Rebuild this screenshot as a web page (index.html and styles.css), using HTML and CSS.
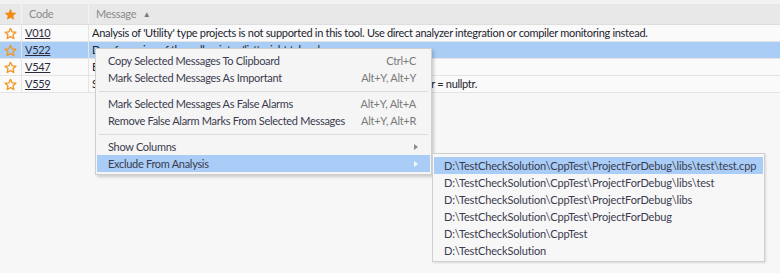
FILE: index.html
```html
<!DOCTYPE html>
<html>
<head>
<meta charset="utf-8">
<link rel="stylesheet" href="styles.css">
</head>
<body>
<div class="app">
  <div class="topstrip"></div>
  <div class="grid">
    <div class="row head">
      <div class="c-star"><svg width="13" height="13" viewBox="0 0 24 24"><path d="M12 1.5l3.2 7 7.6.8-5.7 5.1 1.6 7.5L12 18l-6.7 3.9 1.6-7.5L1.2 9.3l7.6-.8z" fill="#f08c14"/></svg></div>
      <div class="c-code">Code</div>
      <div class="c-msg">Message <span class="sort">&#9650;</span></div>
    </div>
    <div class="row">
      <div class="c-star"><svg width="13" height="13" viewBox="0 0 24 24"><path d="M12 2.5l2.9 6.4 7 .8-5.2 4.7 1.5 6.9L12 17.7l-6.2 3.6 1.5-6.9L2.1 9.7l7-.8z" fill="none" stroke="#f2951e" stroke-width="2.4" stroke-linejoin="round"/></svg></div>
      <div class="c-code"><a>V010</a></div>
      <div class="c-msg">Analysis of 'Utility' type projects is not supported in this tool. Use direct analyzer integration or compiler monitoring instead.</div>
    </div>
    <div class="row sel">
      <div class="c-star"><svg width="13" height="13" viewBox="0 0 24 24"><path d="M12 2.5l2.9 6.4 7 .8-5.2 4.7 1.5 6.9L12 17.7l-6.2 3.6 1.5-6.9L2.1 9.7l7-.8z" fill="none" stroke="#f2951e" stroke-width="2.4" stroke-linejoin="round"/></svg></div>
      <div class="c-code"><a>V522</a></div>
      <div class="c-msg">Dereferencing of the null pointer 'list' might take place.</div>
    </div>
    <div class="row">
      <div class="c-star"><svg width="13" height="13" viewBox="0 0 24 24"><path d="M12 2.5l2.9 6.4 7 .8-5.2 4.7 1.5 6.9L12 17.7l-6.2 3.6 1.5-6.9L2.1 9.7l7-.8z" fill="none" stroke="#f2951e" stroke-width="2.4" stroke-linejoin="round"/></svg></div>
      <div class="c-code"><a>V547</a></div>
      <div class="c-msg">Expression 'list != nullptr' is always true.</div>
    </div>
    <div class="row">
      <div class="c-star"><svg width="13" height="13" viewBox="0 0 24 24"><path d="M12 2.5l2.9 6.4 7 .8-5.2 4.7 1.5 6.9L12 17.7l-6.2 3.6 1.5-6.9L2.1 9.7l7-.8z" fill="none" stroke="#f2951e" stroke-width="2.4" stroke-linejoin="round"/></svg></div>
      <div class="c-code"><a>V559</a></div>
      <div class="c-msg">Suspicious assignment inside the condition expression of 'if' operator: &nbsp;&nbsp;&nbsp;&nbsp;&nbsp;&nbsp;ptr = nullptr.</div>
    </div>
  </div>

  <div class="menu">
    <div class="item"><span>Copy Selected Messages To Clipboard</span><span class="key">Ctrl+C</span></div>
    <div class="item"><span>Mark Selected Messages As Important</span><span class="key">Alt+Y, Alt+Y</span></div>
    <div class="sep"></div>
    <div class="item"><span>Mark Selected Messages As False Alarms</span><span class="key">Alt+Y, Alt+A</span></div>
    <div class="item"><span>Remove False Alarm Marks From Selected Messages</span><span class="key">Alt+Y, Alt+R</span></div>
    <div class="sep"></div>
    <div class="item"><span>Show Columns</span><span class="arrow"></span></div>
    <div class="item hl"><span>Exclude From Analysis</span><span class="arrow"></span></div>
  </div>

  <div class="submenu">
    <div class="sitem hl">D:\TestCheckSolution\CppTest\ProjectForDebug\libs\test\test.cpp</div>
    <div class="sitem">D:\TestCheckSolution\CppTest\ProjectForDebug\libs\test</div>
    <div class="sitem">D:\TestCheckSolution\CppTest\ProjectForDebug\libs</div>
    <div class="sitem">D:\TestCheckSolution\CppTest\ProjectForDebug</div>
    <div class="sitem">D:\TestCheckSolution\CppTest</div>
    <div class="sitem">D:\TestCheckSolution</div>
  </div>
</div>
</body>
</html>
```
FILE: styles.css
```css
html, body {
  margin: 0;
  padding: 0;
  background: #f7f7f7;
}
body {
  font-family: Lato, "Noto Sans", sans-serif;
  font-size: 11px;
  letter-spacing: -0.3px;
  color: #23232d;
  width: 780px;
  height: 273px;
  overflow: hidden;
}
.app {
  position: relative;
  width: 780px;
  height: 273px;
}
.topstrip {
  height: 4px;
  background: #f2f2f2;
}
.row {
  display: flex;
  height: 16px;
  border-bottom: 1px solid #e4e4e4;
  background: #fafafa;
  line-height: 16px;
  white-space: nowrap;
}
.row.head {
  height: 20px;
  line-height: 20px;
  background: #e8e8e8;
  border-bottom: 1px solid #dedede;
  color: #8a8a8a;
}
.row.sel {
  background: #a9cdf5;
}
.c-star {
  width: 21px;
  flex: none;
  display: flex;
  align-items: center;
  justify-content: center;
  border-right: 1px solid #e4e4e4;
}
.head .c-star { border-right-color: #f3f3f3; }
.c-code {
  width: 67px;
  flex: none;
  padding-left: 3px;
  box-sizing: border-box;
  border-right: 1px solid #e4e4e4;
}
.head .c-code { padding-left: 7px; border-right-color: #f3f3f3; }
.c-code a {
  color: #2a2a3a;
  text-decoration: underline;
}
.c-msg {
  flex: 1;
  padding-left: 3px;
  overflow: hidden;
}
.head .c-msg { padding-left: 7px; }
.sort {
  font-size: 8px;
  color: #7a7a7a;
  vertical-align: 1px;
  margin-left: 4px;
}
.menu {
  position: absolute;
  left: 95px;
  top: 48px;
  width: 333px;
  padding: 3px 1px 2px 1px;
  background: #f5f5f5;
  border: 1px solid #cfcfcf;
  box-shadow: 2px 2px 3px rgba(0,0,0,0.18);
  color: #3b3b4e;
}
.item {
  display: flex;
  justify-content: space-between;
  align-items: center;
  height: 17px;
  padding: 0 14px 0 11px;
  white-space: nowrap;
}
.item.hl { background: #a9cdf6; }
.key { color: #7a7a7a; }
.arrow {
  width: 0;
  height: 0;
  border-top: 3.5px solid transparent;
  border-bottom: 3.5px solid transparent;
  border-left: 4px solid #8a8a8a;
  margin-right: -2px;
}
.hl .arrow { border-left-color: #f3f7fc; }
.sep {
  height: 1px;
  background: #dcdcdc;
  margin: 5px 2px 3px 2px;
}
.submenu {
  position: absolute;
  left: 432px;
  top: 153px;
  width: 329px;
  padding: 3px 1px 2px 1px;
  background: #f7f7f7;
  border: 1px solid #cfcfcf;
  box-shadow: 1px 1px 2px rgba(0,0,0,0.12);
  color: #3b3b4e;
  letter-spacing: -0.15px;
}
.sitem {
  height: 17px;
  line-height: 17px;
  padding-left: 10px;
  white-space: nowrap;
}
.sitem.hl { background: #a9cdf6; }
```
